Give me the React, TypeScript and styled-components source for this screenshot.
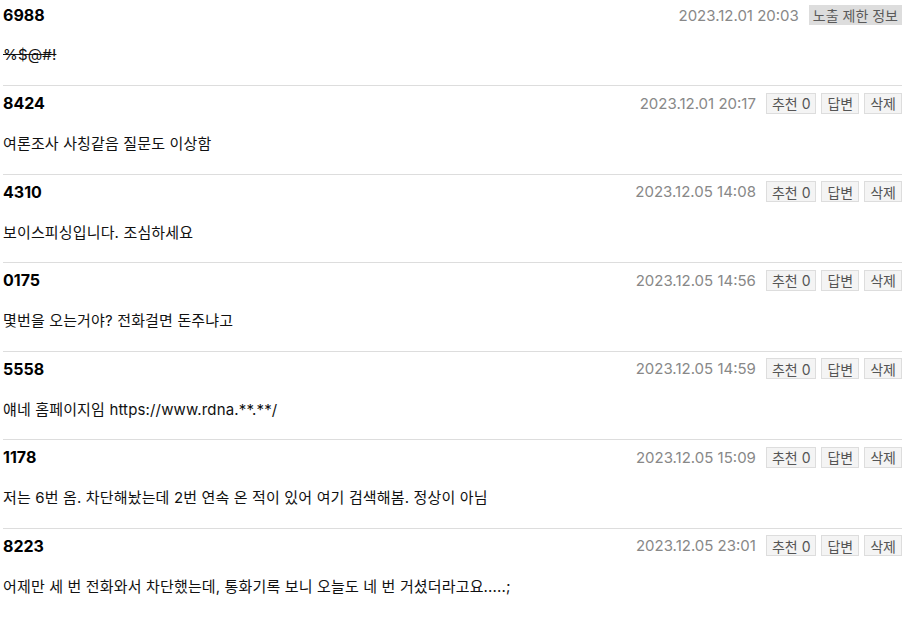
import React from 'react'
import styled, { createGlobalStyle } from 'styled-components'

const GlobalStyle = createGlobalStyle`
  body {
    margin: 0;
    background: #fff;
    font-family: Inter, 'Noto Sans CJK KR', sans-serif;
    color: #111;
  }
`

interface Comment {
  id: string
  date: string
  body: string
  restricted?: boolean
  likes?: number
}

const comments: Comment[] = [
  { id: '6988', date: '2023.12.01 20:03', body: '%$@#!', restricted: true },
  { id: '8424', date: '2023.12.01 20:17', body: '여론조사 사칭같음 질문도 이상함', likes: 0 },
  { id: '4310', date: '2023.12.05 14:08', body: '보이스피싱입니다. 조심하세요', likes: 0 },
  { id: '0175', date: '2023.12.05 14:56', body: '몇번을 오는거야? 전화걸면 돈주냐고', likes: 0 },
  { id: '5558', date: '2023.12.05 14:59', body: '얘네 홈페이지임 https://www.rdna.**.**/', likes: 0 },
  {
    id: '1178',
    date: '2023.12.05 15:09',
    body: '저는 6번 옴. 차단해놨는데 2번 연속 온 적이 있어 여기 검색해봄. 정상이 아님',
    likes: 0,
  },
  {
    id: '8223',
    date: '2023.12.05 23:01',
    body: '어제만 세 번 전화와서 차단했는데, 통화기록 보니 오늘도 네 번 거셨더라고요.....;',
    likes: 0,
  },
]

const List = styled.div`
  padding: 0 7px 0 3px;
`

const Item = styled.div`
  padding: 6px 0 18px;
  border-bottom: 1px solid #ddd;
  &:first-child {
    padding-top: 4px;
    padding-bottom: 18.5px;
  }
  &:first-child p {
    margin-top: 18px;
  }
  &:last-child {
    border-bottom: none;
  }
`

const Header = styled.div`
  display: flex;
  align-items: center;
  height: 22px;
`

const Name = styled.span`
  font-size: 16px;
  font-weight: 700;
  color: #000;
  flex: 1;
`

const DateText = styled.span`
  font-size: 15px;
  color: #888;
  margin-right: 10px;
`

const Actions = styled.div`
  display: flex;
  gap: 5px;
`

const Button = styled.span`
  display: inline-flex;
  align-items: center;
  height: 19px;
  padding: 0 5px;
  font-size: 14px;
  color: #555;
  background: #f4f4f4;
  border: 1px solid #ddd;
`

const Restricted = styled.span`
  display: inline-flex;
  align-items: center;
  height: 20px;
  padding: 0 4px;
  font-size: 14px;
  color: #5a5a5a;
  background: #ddd;
`

const Body = styled.p<{ $struck?: boolean }>`
  margin: 19px 0 0;
  font-size: 15px;
  line-height: 22.5px;
  letter-spacing: 0.15px;
  color: #111;
  text-decoration: ${(p) => (p.$struck ? 'line-through' : 'none')};
`

export default function App() {
  return (
    <>
      <GlobalStyle />
      <List>
        {comments.map((c) => (
          <Item key={c.id}>
            <Header>
              <Name>{c.id}</Name>
              <DateText>{c.date}</DateText>
              {c.restricted ? (
                <Restricted>노출 제한 정보</Restricted>
              ) : (
                <Actions>
                  <Button>추천 {c.likes}</Button>
                  <Button>답변</Button>
                  <Button>삭제</Button>
                </Actions>
              )}
            </Header>
            <Body $struck={c.restricted}>{c.body}</Body>
          </Item>
        ))}
      </List>
    </>
  )
}
